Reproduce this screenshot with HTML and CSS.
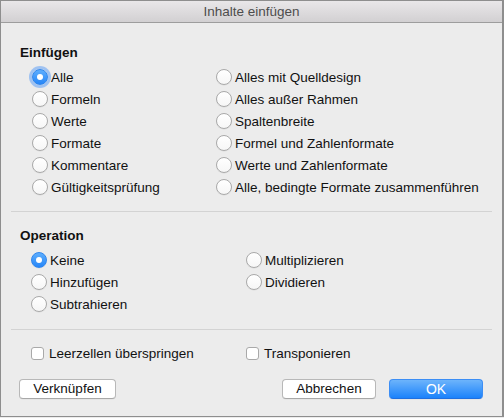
FILE: index.html
```html
<!DOCTYPE html>
<html lang="de">
<head>
<meta charset="utf-8">
<title>Inhalte einfügen</title>
<link rel="stylesheet" href="styles.css">
</head>
<body>
<div class="window">
  <div class="titlebar">Inhalte einfügen</div>
  <div class="content">
    <div class="heading heading-paste">Einfügen</div>
    <div class="options paste-options">
      <div class="col">
        <label class="opt"><span class="radio on focus"></span>Alle</label>
        <label class="opt"><span class="radio"></span>Formeln</label>
        <label class="opt"><span class="radio"></span>Werte</label>
        <label class="opt"><span class="radio"></span>Formate</label>
        <label class="opt"><span class="radio"></span>Kommentare</label>
        <label class="opt"><span class="radio"></span>Gültigkeitsprüfung</label>
      </div>
      <div class="col">
        <label class="opt"><span class="radio"></span>Alles mit Quelldesign</label>
        <label class="opt"><span class="radio"></span>Alles außer Rahmen</label>
        <label class="opt"><span class="radio"></span>Spaltenbreite</label>
        <label class="opt"><span class="radio"></span>Formel und Zahlenformate</label>
        <label class="opt"><span class="radio"></span>Werte und Zahlenformate</label>
        <label class="opt"><span class="radio"></span>Alle, bedingte Formate zusammenführen</label>
      </div>
    </div>

    <div class="separator sep-1"></div>

    <div class="heading heading-op">Operation</div>
    <div class="options op-options">
      <div class="col">
        <label class="opt"><span class="radio on"></span>Keine</label>
        <label class="opt"><span class="radio"></span>Hinzufügen</label>
        <label class="opt"><span class="radio"></span>Subtrahieren</label>
      </div>
      <div class="col">
        <label class="opt"><span class="radio"></span>Multiplizieren</label>
        <label class="opt"><span class="radio"></span>Dividieren</label>
      </div>
    </div>

    <div class="separator sep-2"></div>

    <div class="options check-options">
      <label class="opt"><span class="check"></span>Leerzellen überspringen</label>
      <label class="opt"><span class="check"></span>Transponieren</label>
    </div>

    <div class="buttons">
      <button class="btn btn-link">Verknüpfen</button>
      <div class="btn-group">
        <button class="btn btn-cancel">Abbrechen</button>
        <button class="btn btn-ok">OK</button>
      </div>
    </div>
  </div>
</div>
</body>
</html>
```

FILE: styles.css
```css
html, body {
  margin: 0;
  padding: 0;
}

body {
  width: 504px;
  height: 418px;
  background: #ececec;
  font-family: "Liberation Sans", Arial, sans-serif;
  font-size: 13.5px;
  color: #111;
  overflow: hidden;
}

.window {
  box-sizing: border-box;
  width: 504px;
  height: 417px;
  border: 1px solid #8e8e8e;
  border-right-width: 2px;
  background: #ececec;
  display: flex;
  flex-direction: column;
}

.titlebar {
  height: 21px;
  line-height: 22px;
  text-align: center;
  color: #4d4d4d;
  background: linear-gradient(#e9e7e9, #d2d0d2);
  border-bottom: 1px solid #9d9d9d;
}

.content {
  display: flex;
  flex-direction: column;
  padding-top: 22px;
}

.heading {
  font-weight: bold;
  line-height: 16px;
  padding-left: 19px;
}

.options {
  display: grid;
  margin-top: 5px;
}

.col {
  display: flex;
  flex-direction: column;
}

.opt {
  display: flex;
  align-items: center;
  height: 22px;
  white-space: nowrap;
}

.paste-options {
  grid-template-columns: 184px auto;
  padding-left: 31px;
}

.op-options {
  grid-template-columns: 215px auto;
  padding-left: 30px;
}

.radio {
  box-sizing: border-box;
  width: 16px;
  height: 16px;
  margin-right: 3px;
  border-radius: 50%;
  border: 1px solid #a9a9a9;
  background: linear-gradient(#ffffff, #f6f6f6);
  box-shadow: 0 0.5px 0.5px rgba(0, 0, 0, 0.08);
  flex: none;
  position: relative;
}

.radio.on {
  border-color: #2f86ee;
  background: linear-gradient(#5eaefd, #2686f8);
}

.radio.on::after {
  content: "";
  position: absolute;
  left: 50%;
  top: 50%;
  width: 6px;
  height: 6px;
  margin: -3px 0 0 -3px;
  border-radius: 50%;
  background: #fff;
}

.radio.focus {
  box-shadow: 0 0 0 3px rgba(96, 160, 245, 0.55);
}

.separator {
  height: 1px;
  background: #d3d3d3;
  margin-left: 10px;
  margin-right: 10px;
}

.sep-1 {
  margin-top: 13px;
  margin-bottom: 16px;
}

.sep-2 {
  margin-top: 14px;
}

.check-options {
  grid-template-columns: 215px auto;
  padding-left: 30px;
  margin-top: 12px;
}

.check {
  box-sizing: border-box;
  width: 13px;
  height: 13px;
  margin-right: 5px;
  border: 1px solid #a9a9a9;
  border-radius: 3px;
  background: #fff;
  flex: none;
}

.buttons {
  display: flex;
  justify-content: space-between;
  margin-top: 15px;
  padding: 0 19px 0 18px;
}

.btn-group {
  display: flex;
  gap: 13px;
}

.btn {
  box-sizing: border-box;
  height: 20px;
  padding: 0;
  font-family: inherit;
  font-size: 13.5px;
  color: #111;
  background: #fff;
  border: 1px solid #b8b8b8;
  border-bottom-color: #a8a8a8;
  border-radius: 4px;
  line-height: 18px;
  box-shadow: 0 0.5px 0.5px rgba(0, 0, 0, 0.06);
}

.btn-link {
  width: 97px;
}

.btn-cancel {
  width: 94px;
}

.btn-ok {
  width: 94px;
  color: #fff;
  font-size: 14px;
  border-color: #3c8ef5;
  border-bottom-color: #1f6fe0;
  background: linear-gradient(#6db4fb, #1b82fb);
}
```
